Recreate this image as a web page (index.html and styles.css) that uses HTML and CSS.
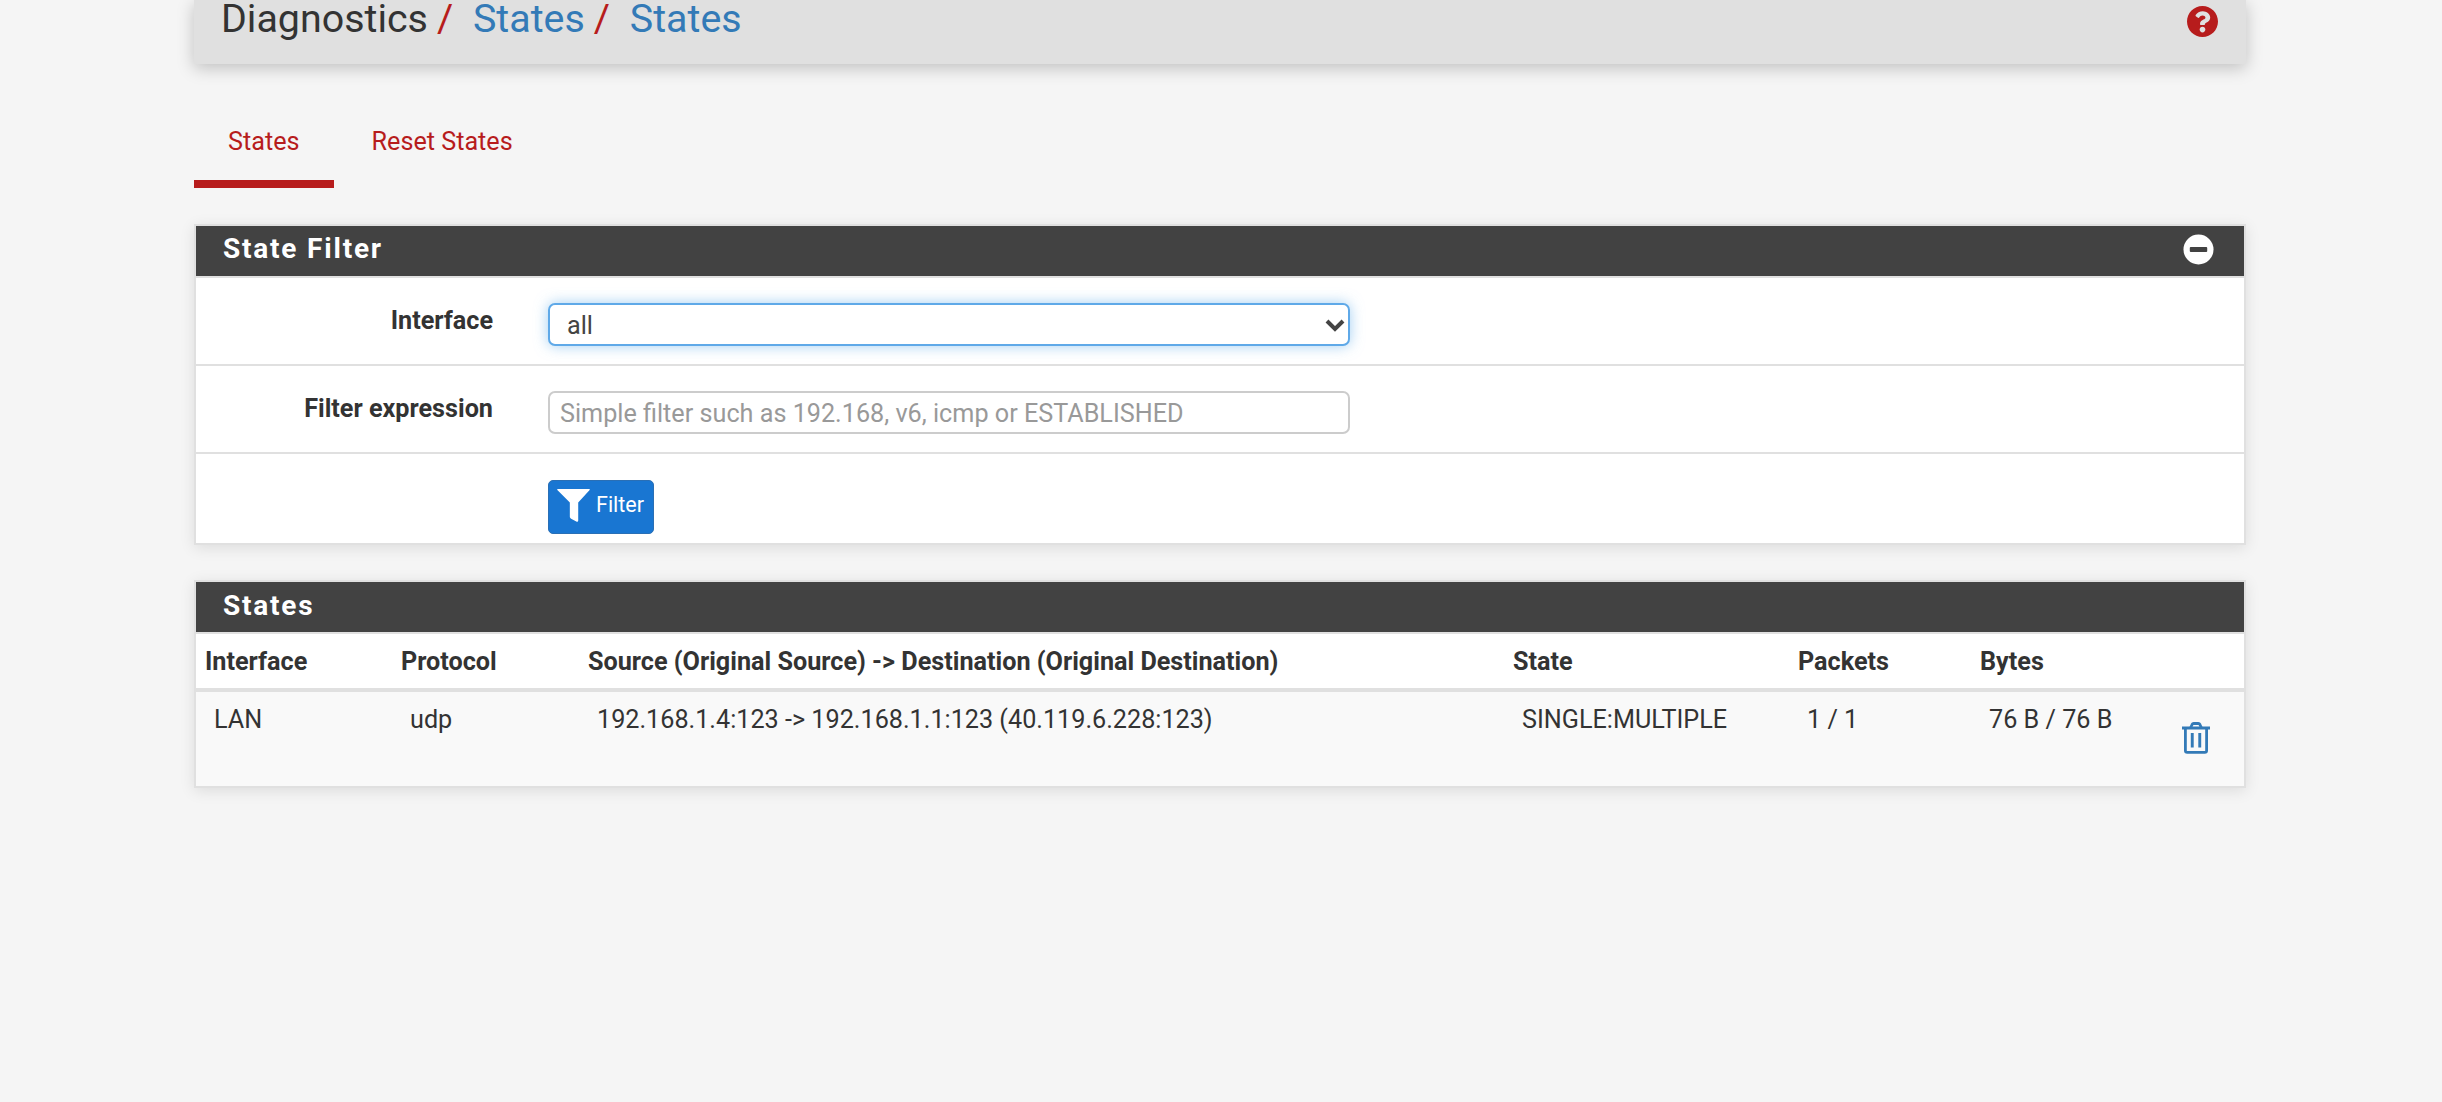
FILE: index.html
```html
<!DOCTYPE html>
<html lang="en">
<head>
<meta charset="utf-8">
<title>Diagnostics: States: States</title>
<link rel="stylesheet" href="styles.css">
</head>
<body>
<div class="page">
  <header class="crumbbar">
    <h1 class="crumbs">
      <span class="crumb">Diagnostics</span><span class="sep">/</span>
      <a class="crumb link">States</a><span class="sep">/</span>
      <a class="crumb link">States</a>
    </h1>
    <svg class="help" viewBox="8 8 496 496"><path fill="#b71c1c" d="M504 256c0 136.997-111.043 248-248 248S8 392.997 8 256C8 119.083 119.043 8 256 8s248 111.083 248 248zM262.655 90c-54.497 0-89.255 22.957-116.549 63.758-3.536 5.286-2.353 12.415 2.715 16.258l34.699 26.31c5.205 3.947 12.621 3.008 16.665-2.122 17.864-22.658 30.113-35.797 57.303-35.797 20.429 0 45.698 13.148 45.698 32.958 0 14.976-12.363 22.667-32.534 33.976C247.128 238.528 216 254.941 216 296v4c0 6.627 5.373 12 12 12h56c6.627 0 12-5.373 12-12v-1.333c0-28.462 83.186-29.647 83.186-106.667 0-58.002-60.165-102-116.531-102zM256 338c-25.365 0-46 20.635-46 46 0 25.364 20.635 46 46 46s46-20.636 46-46c0-25.365-20.635-46-46-46z"/></svg>
  </header>

  <nav class="tabs">
    <a class="tab active">States</a>
    <a class="tab">Reset States</a>
  </nav>

  <section class="panel filter-panel">
    <div class="panel-heading">
      <h2 class="panel-title">State Filter</h2>
      <svg class="collapse" viewBox="0 0 32 32"><circle cx="16" cy="16" r="15.5" fill="#fff"/><rect x="7" y="13.5" width="18" height="5" rx="1" fill="#424242"/></svg>
    </div>
    <div class="form-row row-first">
      <label class="form-label">Interface</label>
      <div class="select-wrap">
        <select class="control select"><option>all</option></select>
        <svg class="chevron" viewBox="0 0 20 14"><path d="M2 3l8 8 8-8" fill="none" stroke="#444" stroke-width="4"/></svg>
      </div>
    </div>
    <div class="form-row row-second">
      <label class="form-label">Filter expression</label>
      <input class="control input" type="text" placeholder="Simple filter such as 192.168, v6, icmp or ESTABLISHED">
    </div>
    <div class="form-row row-last">
      <button class="btn" type="button">
        <svg class="funnel" viewBox="1 1 31 31.500"><path fill="#fff" d="M1 1.500c0-.5.4-.8.9-.8h29.200c.5 0 .9.3.9.8 0 .3-.1.5-.3.7L21 14v17c0 1-.9 1.600-1.800 1.100l-5-2.800c-.7-.4-1.200-1-1.200-1.800V14L1.300 2.200C1.100 2 1 1.800 1 1.500z"/></svg>
        <span class="btn-label">Filter</span>
      </button>
    </div>
  </section>

  <section class="panel states-panel">
    <div class="panel-heading">
      <h2 class="panel-title">States</h2>
    </div>
    <table class="states">
      <colgroup>
        <col class="c-if"><col class="c-proto"><col class="c-src"><col class="c-state"><col class="c-pkts"><col class="c-bytes"><col class="c-act">
      </colgroup>
      <thead>
        <tr>
          <th>Interface</th><th>Protocol</th><th>Source (Original Source) -&gt; Destination (Original Destination)</th><th>State</th><th>Packets</th><th>Bytes</th><th></th>
        </tr>
      </thead>
      <tbody>
        <tr>
          <td>LAN</td><td>udp</td><td>192.168.1.4:123 -&gt; 192.168.1.1:123 (40.119.6.228:123)</td><td>SINGLE:MULTIPLE</td><td>1 / 1</td><td>76 B / 76 B</td>
          <td class="action">
            <svg class="trash" viewBox="0 0 28 32"><g fill="none" stroke="#337ab7" stroke-width="2.800"><path d="M0 6h28" stroke-linecap="round"/><path d="M3.400 6v22.500c0 1 .7 1.900 1.800 1.900h17.600c1.100 0 1.800-.9 1.800-1.900V6"/><path d="M8.500 6l1.600-3.500c.3-.6.800-1 1.500-1h4.800c.7 0 1.200.4 1.500 1L19.500 6"/></g><path d="M8.800 11h2.900v14.500H8.800zM16.300 11h2.900v14.500h-2.900z" fill="#337ab7"/></svg>
          </td>
        </tr>
      </tbody>
    </table>
  </section>
</div>
</body>
</html>
```
FILE: styles.css
```css
* { box-sizing: border-box; }
html, body { margin: 0; padding: 0; height: 100%; overflow: hidden; }
body {
  background: #f5f5f5;
  color: #333;
  font-family: Roboto, "Liberation Sans", sans-serif;
  font-size: 25.200px;
}
.page { width: 2052px; margin-left: 194px; }

.crumbbar {
  height: 64px;
  background: #e0e0e0;
  box-shadow: 0 4px 16px rgba(0,0,0,.22);
  display: flex;
  justify-content: space-between;
  padding: 0 28px 0 27px;
  position: relative;
}
.crumbs {
  margin: 0;
  font-size: 39.400px;
  font-weight: 400;
  line-height: 38px;
  white-space: nowrap;
}
.sep { color: #b71c1c; margin: 0 9px 0 9px; }
.crumb.link { color: #337ab7; margin-left: 1px; }
.help { width: 31px; height: 31px; margin-top: 6px; }

.tabs { display: flex; margin-top: 41px; height: 83px; }
.tab {
  padding: 14px 34px 0;
  color: #b71c1c;
  height: 83px;
  line-height: 46px;
}
.tab.active { border-bottom: 8px solid #b71c1c; }
.tab + .tab { padding-left: 38px; }

.panel {
  background: #fff;
  border: 2px solid #e0e0e0;
  box-shadow: 0 3px 14px rgba(0,0,0,.1);
}
.filter-panel { margin-top: 36px; }
.states-panel { margin-top: 35px; }
.panel-heading {
  background: #424242;
  height: 50px;
  margin-bottom: 2px;
  display: flex;
  align-items: center;
  justify-content: space-between;
  padding: 0 27px 3px;
  box-shadow: 0 2px 0 #e0e0e0;
}
.states-panel .panel-heading { padding-bottom: 1px; }
.panel-title {
  margin: 0 0 1px;
  color: #fff;
  font-size: 28px;
  font-weight: 700;
  letter-spacing: 1.800px;
  line-height: 44px;
}
.collapse { width: 31px; height: 31px; margin-right: 3px; }

.form-row {
  display: flex;
  align-items: flex-start;
  border-bottom: 2px solid #e0e0e0;
}
.row-first { height: 88px; padding-top: 25px; }
.row-second { height: 88px; padding-top: 25px; }
.row-last { height: 89px; padding-top: 26px; padding-left: 352px; border-bottom: 0; }
.form-label {
  width: 297px;
  text-align: right;
  font-weight: 700;
  line-height: 30px;
  margin-right: 55px;
  margin-top: 3px;
  flex: none;
}

.select-wrap { position: relative; width: 802px; height: 43px; }
.control {
  display: block;
  width: 802px;
  height: 43px;
  font: 400 25.200px Roboto, "Liberation Sans", sans-serif;
  color: #444;
  background: #fff;
  border-radius: 7px;
  outline: none;
}
.select {
  appearance: none;
  -webkit-appearance: none;
  border: 2px solid #5fa9e8;
  box-shadow: 0 0 14px rgba(102,175,233,.6);
  padding: 2px 0 0 17px;
}
.chevron { position: absolute; right: 5px; top: 15px; width: 20px; height: 14px; }
.input {
  border: 2px solid #ccc;
  padding: 2px 10px 0 10px;
}
.input::placeholder { color: #999; opacity: 1; }

.btn {
  display: flex;
  align-items: center;
  width: 106px;
  height: 54px;
  padding: 0 0 0 8px;
  background: #1976d2;
  border: 1px solid #2a6fb5;
  border-radius: 5px;
  color: #fff;
  font: 400 21.500px Roboto, "Liberation Sans", sans-serif;
}
.funnel { width: 33px; height: 33px; margin: 0 6px 3px 0; flex: none; }
.btn-label { margin-bottom: 6px; }

.states { width: 100%; border-collapse: collapse; table-layout: fixed; }
.c-if { width: 196px; }
.c-proto { width: 187px; }
.c-src { width: 925px; }
.c-state { width: 285px; }
.c-pkts { width: 182px; }
.c-bytes { width: 190px; }
.states th {
  text-align: left;
  font-weight: 700;
  height: 56px;
  padding: 0 9px;
  border-bottom: 4px solid #e0e0e0;
  white-space: nowrap;
}
.states td {
  background: #f9f9f9;
  height: 96px;
  padding: 13px 0 0 18px;
  vertical-align: top;
  line-height: 30px;
  white-space: nowrap;
}
.states td.action { padding: 30px 0 0 21px; }
.trash { display: block; width: 28px; height: 32px; }
```
